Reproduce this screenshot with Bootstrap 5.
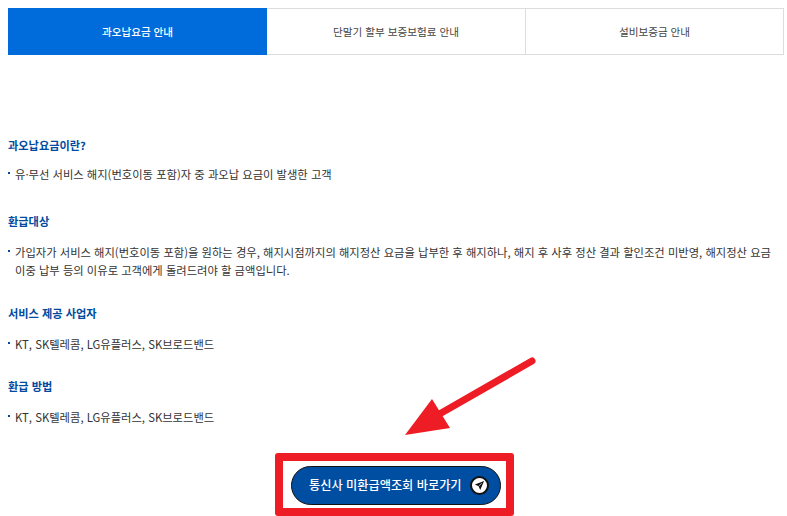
<!doctype html>
<html lang="ko">
<head>
<meta charset="utf-8">
<title>과오납요금 안내</title>
<link rel="stylesheet" href="https://cdn.jsdelivr.net/npm/bootstrap@5.3.0/dist/css/bootstrap.min.css">
<style>
html,body{height:516px;overflow:hidden}
body{font-family:"Noto Sans CJK KR","Noto Sans",sans-serif;font-size:11.3px;color:#333;background:#fff;position:relative}
.page-wrap{padding:8px 3px 0 8px}
.tab-row{height:47px}
.tab-cell{border:1px solid #ddd;border-left-width:0;border-right-width:0;color:#444;font-size:10.6px;width:259px}
.tab-cell.tab-mid{width:258px}
.tab-cell:last-child{border-left-width:1px;border-right-width:1px;flex:1 1 0;width:auto}
.tab-cell.is-on{background:#006cdc;border-color:#006cdc;color:#fff;font-weight:500}
.intro{margin-top:81px}
.sec-title{font-size:11.2px;font-weight:700;color:#004ba0;line-height:18px;margin:0 0 13px}
.sec-title.tight{margin-bottom:11px}
.dot-list{list-style:none;margin:0;padding:0 0 0 7px}
.dot-list li{position:relative;line-height:18px;color:#333}
.dot-list li::before{content:"";position:absolute;left:-7px;top:7px;width:2px;height:2px;background:#004ba0}
.gap-one{margin-bottom:29px}
.gap-two{margin-bottom:25px}
.gap-three{margin-bottom:24px}
.red-frame{border:8px solid #ee1c25;border-radius:3px;width:239px;height:63px;margin-top:27px;margin-left:267px}
.go-btn{width:210px;height:39px;margin:2px 0 0 3px;background:#004ea2;border:1px solid #111;border-radius:20px;color:#fff;font-size:12.2px;font-weight:500;padding:0 11px 0 17px}
.go-btn:hover{background:#004ea2;color:#fff}
.go-ico{width:19px;height:19px;background:#fff;border:2px solid #111;border-radius:50%}
.big-arrow{position:absolute;left:400px;top:349px}
</style>
</head>
<body>
<div class="page-wrap">
  <div class="d-flex tab-row">
    <div class="tab-cell is-on d-flex align-items-center justify-content-center">과오납요금 안내</div>
    <div class="tab-cell tab-mid d-flex align-items-center justify-content-center">단말기 할부 보증보험료 안내</div>
    <div class="tab-cell d-flex align-items-center justify-content-center">설비보증금 안내</div>
  </div>
  <div class="intro">
    <h2 class="sec-title tight">과오납요금이란?</h2>
    <ul class="dot-list gap-one"><li>유·무선 서비스 해지(번호이동 포함)자 중 과오납 요금이 발생한 고객</li></ul>
    <h2 class="sec-title">환급대상</h2>
    <ul class="dot-list gap-two"><li>가입자가 서비스 해지(번호이동 포함)을 원하는 경우, 해지시점까지의 해지정산 요금을 납부한 후 해지하나, 해지 후 사후 정산 결과 할인조건 미반영, 해지정산 요금 이중 납부 등의 이유로 고객에게 돌려드려야 할 금액입니다.</li></ul>
    <h2 class="sec-title">서비스 제공 사업자</h2>
    <ul class="dot-list gap-three"><li>KT, SK텔레콤, LG유플러스, SK브로드밴드</li></ul>
    <h2 class="sec-title">환급 방법</h2>
    <ul class="dot-list"><li>KT, SK텔레콤, LG유플러스, SK브로드밴드</li></ul>
  </div>
  <div class="red-frame d-flex align-items-center justify-content-center">
    <a href="#" class="go-btn btn d-flex align-items-center justify-content-between">통신사 미환급액조회 바로가기
      <span class="go-ico d-flex align-items-center justify-content-center">
        <svg width="11" height="11" viewBox="0 0 12 12"><path d="M11 1 1 5l4 1.8L6.8 11z" fill="#111"/><path d="M8.5 3.5 5 6.8" stroke="#fff" stroke-width=".7"/></svg>
      </span>
    </a>
  </div>
</div>
<svg class="big-arrow" width="140" height="90" viewBox="0 0 140 90">
  <path d="M132 12 36 67" stroke="#ee1c25" stroke-width="7" stroke-linecap="round" fill="none"/>
  <path d="M5 86 32 50 50 79z" fill="#ee1c25"/>
</svg>
<script src="https://cdn.jsdelivr.net/npm/bootstrap@5.3.0/dist/js/bootstrap.bundle.min.js"></script>
</body>
</html>
